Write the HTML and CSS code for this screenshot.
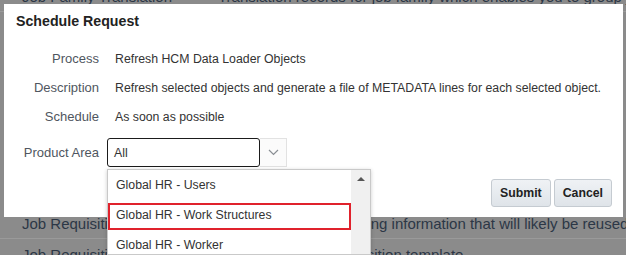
FILE: index.html
```html
<!DOCTYPE html>
<html lang="en">
<head>
    <meta charset="UTF-8">
    <title>Schedule Request</title>
    <link rel="stylesheet" href="styles.css">
</head>
<body>

    <!-- page behind the modal, dimmed -->
    <div class="page">
        <div class="page__row page__row--top">
            <span class="page__name">Job Family Translation</span>
            <span class="page__desc">Translation records for job family which enables you to group job families</span>
        </div>
        <div class="page__filler"></div>
        <div class="page__row">
            <span class="page__name">Job Requisition Template</span>
            <span class="page__desc page__desc--mid">Template containing information that will likely be reused for</span>
        </div>
        <div class="page__row">
            <span class="page__name">Job Requisition</span>
            <span class="page__desc page__desc--far">Job requisition template</span>
        </div>
    </div>

    <div class="dialog">
        <div class="dialog__title">Schedule Request</div>

        <div class="form">
            <div class="form__label">Process</div>
            <div class="form__value">Refresh HCM Data Loader Objects</div>

            <div class="form__label">Description</div>
            <div class="form__value">Refresh selected objects and generate a file of METADATA lines for each selected object.</div>

            <div class="form__label">Schedule</div>
            <div class="form__value">As soon as possible</div>

            <div class="form__label form__label--field">Product Area</div>
            <div class="select">
                <div class="select__input">All</div>
                <div class="select__button">
                    <svg width="11" height="7" viewBox="0 0 11 7">
                        <path d="M1 1 L5.5 5.5 L10 1" fill="none" stroke="#8a8f94" stroke-width="1.2"/>
                    </svg>
                </div>
            </div>
        </div>

        <div class="dialog__footer">
            <button class="button">Submit</button>
            <button class="button">Cancel</button>
        </div>
    </div>

    <div class="list">
        <div class="list__items">
            <div class="list__item">Global HR - Users</div>
            <div class="list__item list__item--active">Global HR - Work Structures</div>
            <div class="list__item">Global HR - Worker</div>
        </div>
        <div class="list__scrollbar">
            <span class="list__arrow"></span>
        </div>
    </div>

</body>
</html>
```

FILE: styles.css
```css
html {
    background-color: #8b8b8b;
}

body {
    font-family: "Liberation Sans", Arial, sans-serif;
    font-size: 13px;
    height: 255px;
    margin: 0;
    overflow: hidden;
    position: relative;
    width: 626px;
}

.page {
    color: #2c3746;
    margin-top: -19px;
    overflow: hidden;
}

.page__row {
    align-items: center;
    border-bottom: 1px solid #9a9a9a;
    display: flex;
    font-size: 15px;
    height: 30px;
    padding-left: 22px;
    white-space: nowrap;
}

.page__name {
    flex: none;
    width: 196px;
}

.page__desc--mid {
    margin-left: 36px;
}

.page__desc--far {
    margin-left: 87px;
}

.page__filler {
    height: 196px;
}

.dialog {
    background-color: #fff;
    box-sizing: border-box;
    display: flex;
    flex-direction: column;
    height: 213px;
    left: 4px;
    position: absolute;
    top: 4px;
    width: 619px;
}

.dialog__title {
    color: #222;
    font-size: 14.2px;
    font-weight: bold;
    line-height: 18px;
    padding: 8px 12px 0;
}

.form {
    column-gap: 8px;
    display: grid;
    grid-template-columns: 83px 1fr;
    line-height: 16px;
    margin-top: 21px;
    padding-left: 12px;
    row-gap: 13px;
}

.form__label {
    color: #4f5660;
    text-align: right;
}

.form__label--field {
    align-self: center;
    margin-top: 1px;
}

.form__value {
    color: #333;
    font-size: 12.3px;
    padding-left: 8px;
    white-space: nowrap;
}

.select {
    display: flex;
    height: 29px;
}

.select__input {
    align-items: center;
    border: 1px solid #1b1b1b;
    border-radius: 3px;
    box-sizing: border-box;
    color: #333;
    display: flex;
    font-size: 12.3px;
    padding-left: 6px;
    padding-top: 1px;
    width: 153px;
}

.select__button {
    align-items: center;
    background-color: #fbfbfb;
    border: 1px solid #e2e2e2;
    border-left: 0;
    box-sizing: border-box;
    display: flex;
    justify-content: center;
    width: 27px;
}

.dialog__footer {
    display: flex;
    gap: 3px;
    justify-content: flex-end;
    margin-top: 12px;
    padding-right: 11px;
}

.button {
    background: linear-gradient(#eff2f5, #dfe4e9);
    border: 1px solid #c5cbd1;
    border-radius: 3px;
    color: #222;
    font-family: "Liberation Sans", Arial, sans-serif;
    font-size: 12.3px;
    font-weight: bold;
    height: 28px;
    padding: 0 8px;
}

.list {
    background-color: #fff;
    border: 1px solid #c9c9c9;
    box-shadow: 0 1px 4px rgba(0, 0, 0, 0.2);
    display: flex;
    height: 84px;
    left: 107px;
    position: absolute;
    top: 169px;
    width: 262px;
}

.list__items {
    flex: 1;
}

.list__item {
    align-items: center;
    color: #333;
    display: flex;
    font-size: 12.3px;
    height: 30px;
    padding-left: 8px;
    position: relative;
}

.list__item--active::after {
    border: 2px solid #e0222c;
    bottom: 0;
    content: "";
    left: 0;
    position: absolute;
    right: 0;
    top: 3px;
}

.list__scrollbar {
    background-color: #f0f0f0;
    display: flex;
    justify-content: center;
    padding-top: 7px;
    width: 19px;
}

.list__arrow {
    border-bottom: 4px solid #555;
    border-left: 4px solid transparent;
    border-right: 4px solid transparent;
    height: 0;
    width: 0;
}
```
